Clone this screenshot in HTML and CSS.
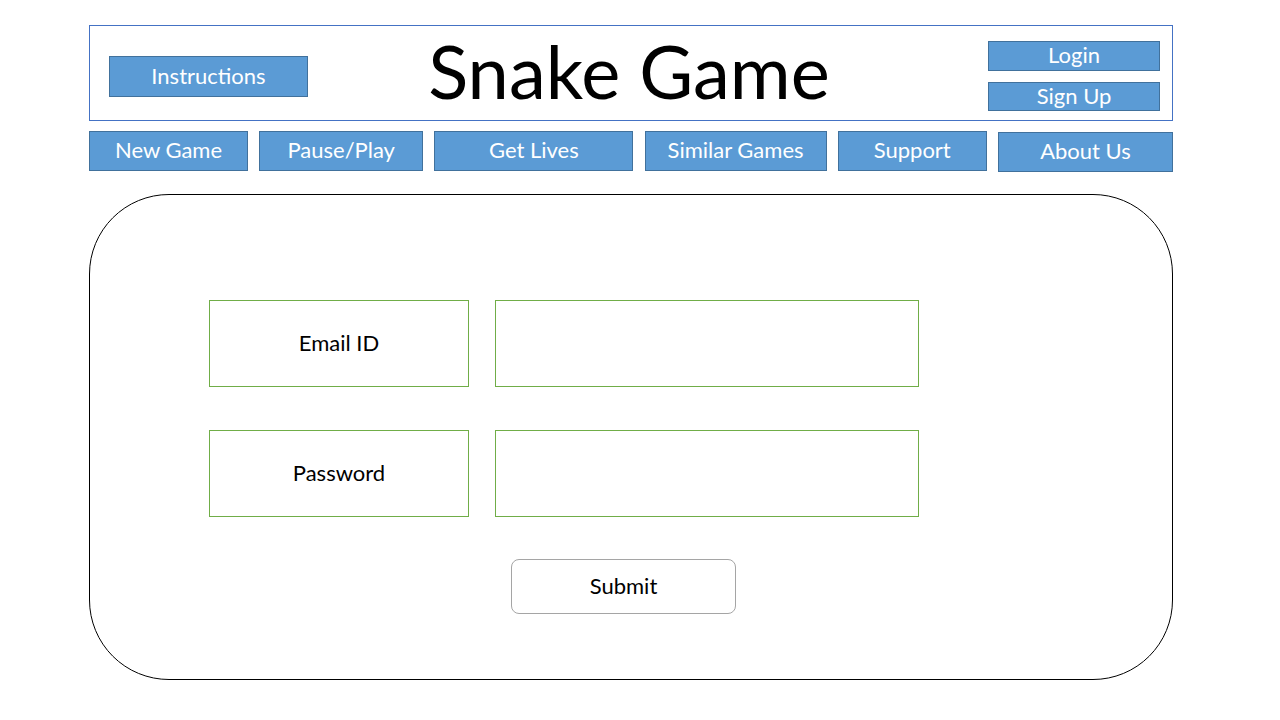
FILE: index.html
```html
<!DOCTYPE html>
<html lang="en">
<head>
<meta charset="utf-8">
<title>Snake Game</title>
<link rel="stylesheet" href="styles.css">
</head>
<body>
<div class="page">
  <header class="header">
    <div class="btn btn-instructions">Instructions</div>
    <h1 class="title">Snake Game</h1>
    <div class="auth">
      <div class="btn btn-auth">Login</div>
      <div class="btn btn-auth btn-signup">Sign Up</div>
    </div>
  </header>
  <nav class="nav">
    <div class="btn nav-btn">New Game</div>
    <div class="btn nav-btn">Pause/Play</div>
    <div class="btn nav-btn">Get Lives</div>
    <div class="btn nav-btn">Similar Games</div>
    <div class="btn nav-btn">Support</div>
    <div class="btn nav-btn nav-about">About Us</div>
  </nav>
  <main class="card">
    <div class="form">
      <div class="row">
        <div class="label">Email ID</div>
        <div class="input"></div>
      </div>
      <div class="row">
        <div class="label">Password</div>
        <div class="input"></div>
      </div>
    </div>
    <div class="submit">Submit</div>
  </main>
</div>
</body>
</html>
```
FILE: styles.css
```css
* { box-sizing: border-box; }
html, body { margin: 0; padding: 0; background: #ffffff; }
body {
  font-family: Lato, "Open Sans", "Noto Sans", sans-serif;
  color: #000;
  width: 1280px;
  height: 720px;
  overflow: hidden;
}
.page {
  width: 1084px;
  margin-left: 89px;
  padding-top: 25px;
}
.header {
  height: 96px;
  border: 1px solid #4472c4;
  display: grid;
  grid-template-columns: 199px 1fr 172px;
  align-items: start;
  padding: 0 12px 0 19px;
}
.btn {
  background: #5b9bd5;
  border: 1px solid #41719c;
  color: #ffffff;
  display: flex;
  align-items: center;
  justify-content: center;
  font-size: 22px;
  line-height: 1;
}
.btn-instructions {
  height: 41px;
  margin-top: 30px;
  padding-bottom: 2px;
}
.title {
  margin: 0;
  font-weight: 400;
  font-size: 74px;
  line-height: 1;
  text-align: center;
  padding-right: 38px;
  margin-top: 8px;
  letter-spacing: 0;
}
.auth {
  display: flex;
  flex-direction: column;
  gap: 11px;
  margin-top: 15px;
}
.btn-auth {
  height: 30px;
  padding-bottom: 2px;
}
.btn-signup { height: 29px; }
.nav {
  margin-top: 10px;
  display: grid;
  grid-template-columns: 159px 164px 199px 182px 149px 175px;
  justify-content: space-between;
  align-items: start;
}
.nav-btn {
  height: 40px;
  padding-bottom: 2px;
}
.nav-about {
  margin-top: 1px;
  height: 40px;
}
.card {
  margin-top: 22px;
  height: 486px;
  border: 1px solid #000;
  border-radius: 80px;
  padding: 105px 0 0 119px;
}
.form {
  display: flex;
  flex-direction: column;
  gap: 43px;
}
.row {
  display: flex;
  gap: 26px;
}
.label, .input {
  height: 87px;
  border: 1px solid #70ad47;
}
.label {
  width: 260px;
  display: flex;
  align-items: center;
  justify-content: center;
  font-size: 22px;
  padding-bottom: 3px;
}
.input { width: 424px; }
.submit {
  margin-top: 42px;
  margin-left: 302px;
  width: 225px;
  height: 55px;
  border: 1px solid #a5a5a5;
  border-radius: 8px;
  display: flex;
  align-items: center;
  justify-content: center;
  font-size: 22px;
  padding-bottom: 3px;
}
```
